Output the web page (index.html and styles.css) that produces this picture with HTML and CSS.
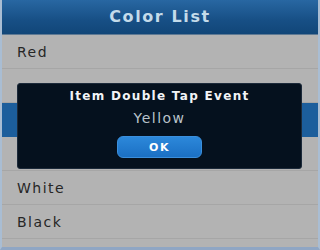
FILE: index.html
```html
<!DOCTYPE html>
<html lang="en">
<head>
    <meta charset="UTF-8">
    <meta name="viewport" content="width=device-width, initial-scale=1.0">
    <title>Color List</title>
    <link rel="stylesheet" href="styles.css">
</head>
<body>

<div class="page">
    <div class="header">
        <h1>Color List</h1>
    </div>

    <ul class="color-list">
        <li>Red</li>
        <li></li>
        <li class="selected"></li>
        <li></li>
        <li>White</li>
        <li>Black</li>
    </ul>

    <div class="dialog">
        <h2>Item Double Tap Event</h2>
        <p>Yellow</p>
        <button class="ok-button">OK</button>
    </div>
</div>

</body>
</html>
```

FILE: styles.css
```css
* {
    margin: 0;
    padding: 0;
    box-sizing: border-box;
}

body {
    width: 320px;
    height: 250px;
    overflow: hidden;
    background: #b2b4b6;
    font-family: "DejaVu Sans", sans-serif;
}

.page {
    position: relative;
    width: 320px;
    height: 250px;
    background: #b3b3b3;
    border-left: 2px solid #a9bdd3;
    border-right: 2px solid #a9bdd3;
    border-bottom: 3px solid #8fa6c4;
}

.header {
    height: 35px;
    display: flex;
    justify-content: center;
    align-items: center;
    background: linear-gradient(180deg, #2867a2 0%, #174f85 60%, #114678 100%);
    border-bottom: 1px solid #5f7a94;
}

.header h1 {
    font-size: 16px;
    font-weight: bold;
    letter-spacing: 1.6px;
    color: #c4dbea;
    padding-bottom: 2px;
}

.color-list {
    list-style: none;
}

.color-list li {
    height: 34px;
    display: flex;
    align-items: center;
    padding-left: 15px;
    font-size: 14px;
    letter-spacing: 1.5px;
    color: #262626;
    border-bottom: 1px solid #a6a6a6;
}

.color-list li.selected {
    background: #1c5e9c;
    border-bottom-color: #1c5e9c;
}

.dialog {
    position: absolute;
    left: 15px;
    top: 83px;
    width: 285px;
    height: 86px;
    display: flex;
    flex-direction: column;
    align-items: center;
    background: #05111e;
    border: 1px solid #1c2a3a;
    border-radius: 3px;
    padding-top: 5px;
}

.dialog h2 {
    font-size: 12px;
    font-weight: bold;
    letter-spacing: 1.3px;
    color: #f2f4f6;
}

.dialog p {
    margin-top: 7px;
    font-size: 14px;
    letter-spacing: 1.5px;
    color: #b9c3cb;
}

.ok-button {
    margin-top: 10px;
    width: 85px;
    height: 22px;
    border: 1px solid #3b8fdc;
    border-radius: 6px;
    background: linear-gradient(180deg, #2c88da 0%, #1b70c4 100%);
    color: white;
    font-family: "DejaVu Sans", sans-serif;
    font-size: 11px;
    font-weight: bold;
    letter-spacing: 1.5px;
}
```
